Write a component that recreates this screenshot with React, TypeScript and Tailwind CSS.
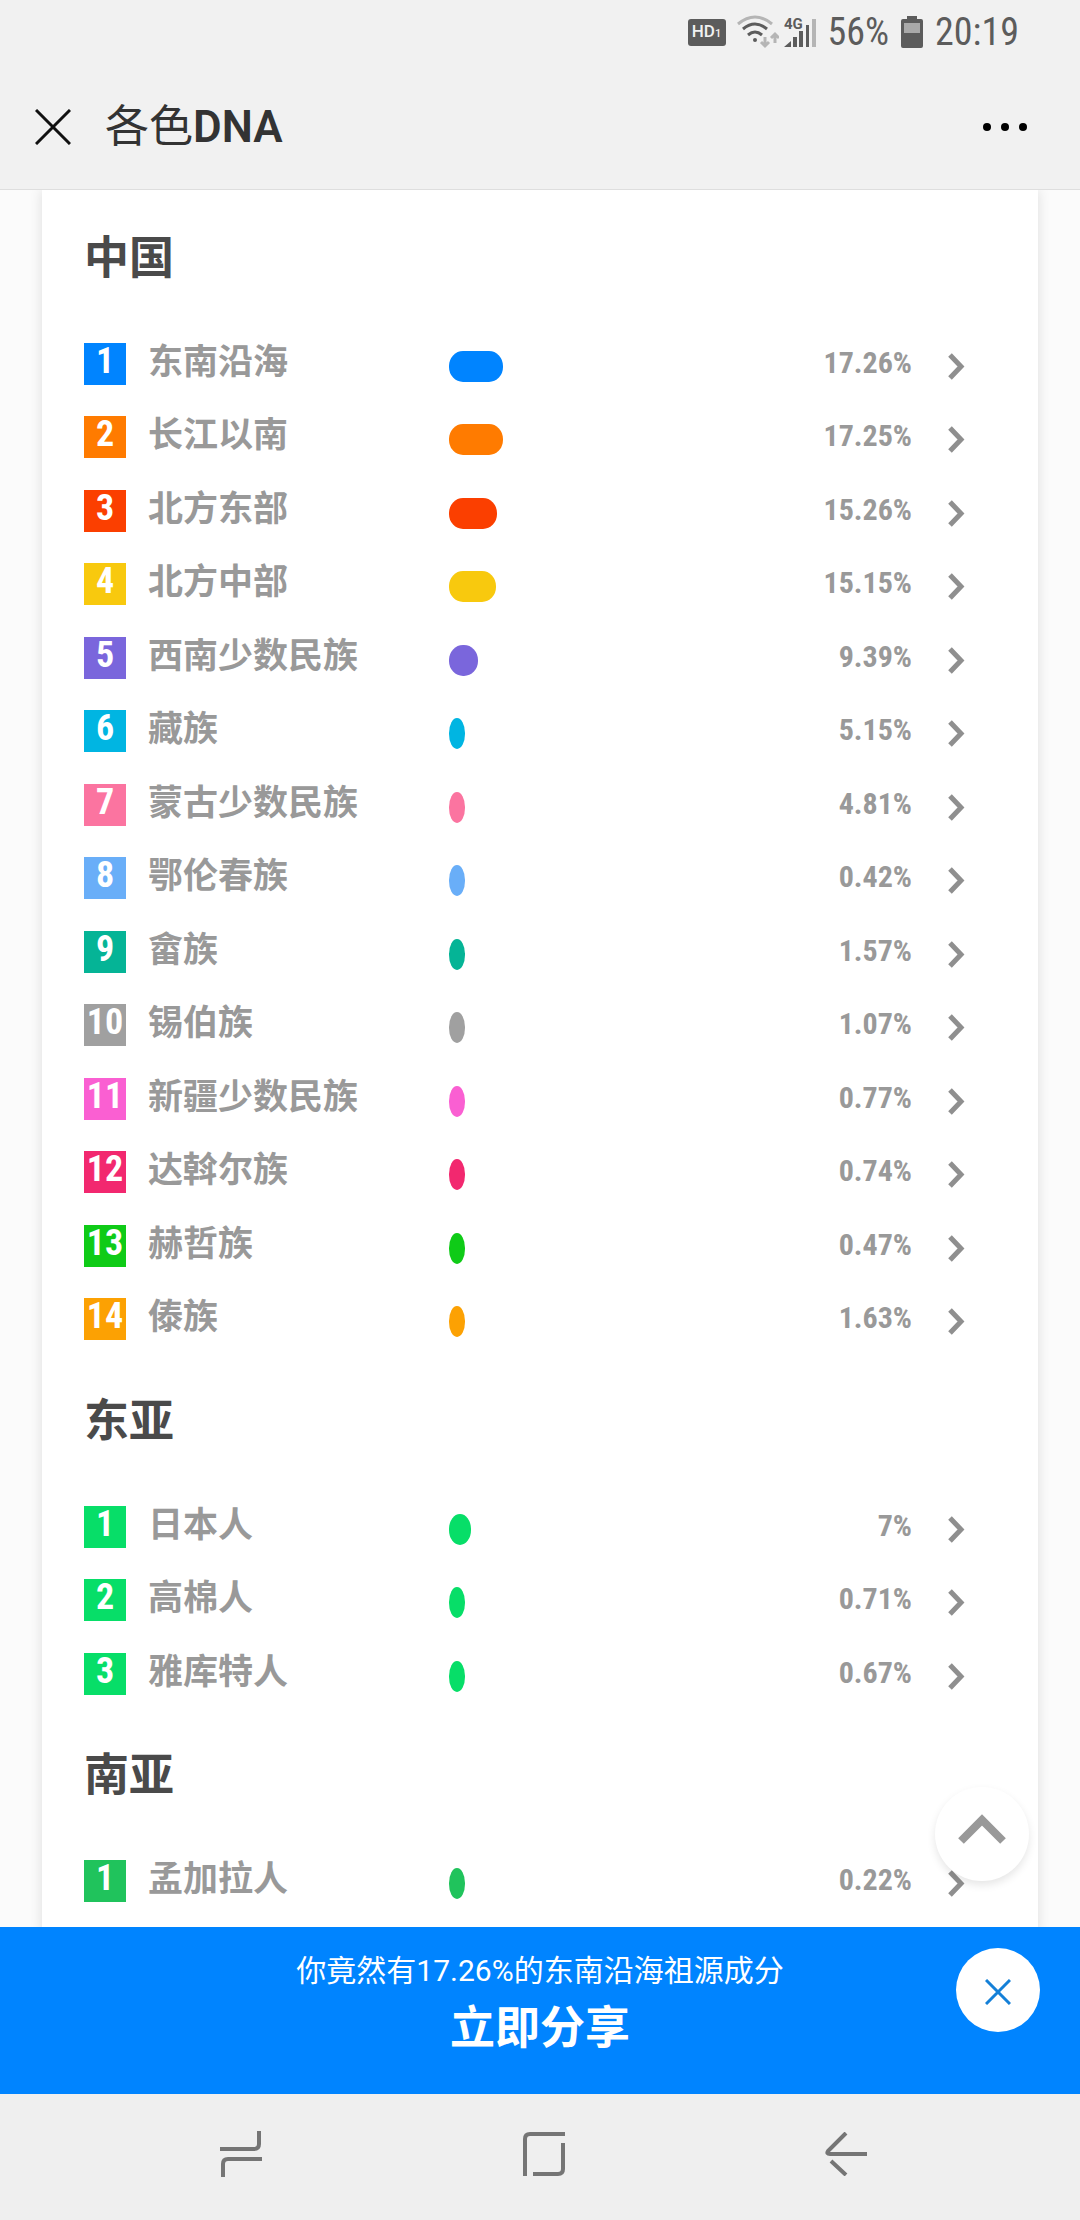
import { useRef, useState } from 'react';

interface Ancestry {
  name: string;
  percent: number;
  color: string;
}

interface Region {
  title: string;
  items: Ancestry[];
}

const regions: Region[] = [
  {
    title: '中国',
    items: [
      { name: '东南沿海', percent: 17.26, color: '#0084ff' },
      { name: '长江以南', percent: 17.25, color: '#ff7b00' },
      { name: '北方东部', percent: 15.26, color: '#fb3f00' },
      { name: '北方中部', percent: 15.15, color: '#f8c90e' },
      { name: '西南少数民族', percent: 9.39, color: '#7a66dc' },
      { name: '藏族', percent: 5.15, color: '#00b5e2' },
      { name: '蒙古少数民族', percent: 4.81, color: '#fb74a0' },
      { name: '鄂伦春族', percent: 0.42, color: '#69aef8' },
      { name: '畲族', percent: 1.57, color: '#05b496' },
      { name: '锡伯族', percent: 1.07, color: '#a0a0a0' },
      { name: '新疆少数民族', percent: 0.77, color: '#fa5fd2' },
      { name: '达斡尔族', percent: 0.74, color: '#f2286f' },
      { name: '赫哲族', percent: 0.47, color: '#0fcb17' },
      { name: '傣族', percent: 1.63, color: '#fca103' },
    ],
  },
  {
    title: '东亚',
    items: [
      { name: '日本人', percent: 7, color: '#07de68' },
      { name: '高棉人', percent: 0.71, color: '#07de68' },
      { name: '雅库特人', percent: 0.67, color: '#07de68' },
    ],
  },
  {
    title: '南亚',
    items: [{ name: '孟加拉人', percent: 0.22, color: '#20c35c' }],
  },
];

// bars never get thinner than 16px
const barWidth = (percent: number) => Math.max(16, Math.round(percent * 3.13));

function StatusBar() {
  return (
    <div className="flex h-16 shrink-0 items-center justify-end pr-[61px] font-['Roboto_Condensed','Liberation_Sans_Narrow',sans-serif] text-[38px] text-[#5c5c5c]">
      <span className="mr-[11px] flex h-[27px] w-[38px] items-center justify-center rounded-[3px] bg-[#5c5c5c] font-['Roboto',sans-serif] text-[17px] font-medium text-[#f1f1f1]">
        HD<span className="pt-1 text-[11px]">1</span>
      </span>
      <svg className="mr-[5px]" width="42" height="34" viewBox="0 0 42 34" fill="none" strokeWidth="3">
        <path d="M1 9Q18-5 35 9" stroke="#b5b5b5" />
        <path d="M6 14Q18 4 30 14" stroke="#5c5c5c" />
        <path d="M11 20Q18 14 25 20" stroke="#5c5c5c" />
        <circle cx="18" cy="25" r="2" fill="#5c5c5c" />
        <path d="M28 22V31M24 27L28 31L32 27" stroke="#b5b5b5" />
        <path d="M38 28V19M34 23L38 19L42 23" stroke="#b5b5b5" />
      </svg>
      <svg className="mr-3" width="32" height="34" viewBox="0 0 32 34" fill="#5c5c5c">
        <text x="0" y="14" fontSize="15" fontWeight="700" fontFamily="Roboto, sans-serif">
          4G
        </text>
        <path d="M0 32L7 26V32ZM9 22H13V32H9ZM15 16H19V32H15ZM22 10H25V32H22Z" />
        <path d="M28 4H32V32H28Z" fill="#b5b5b5" />
      </svg>
      <span className="mr-3 leading-10">56%</span>
      <svg className="mr-3" width="22" height="32" viewBox="0 0 22 32">
        <path d="M6 0H16V3H20Q22 3 22 5V30Q22 32 20 32H2Q0 32 0 30V5Q0 3 2 3H6Z" fill="#5c5c5c" />
        <path d="M3 7H19V17H3Z" fill="#a9a9a9" />
      </svg>
      <span className="leading-10">20:19</span>
    </div>
  );
}

function AncestryRow({ item, rank }: { item: Ancestry; rank: number }) {
  const width = barWidth(item.percent);
  return (
    <li className="odd:h-[73px] even:h-[74px]">
      <a href="#detail" className="flex items-start text-[#999999]">
        <span
          className="mr-[22px] h-[42px] w-[42px] shrink-0 text-center font-['Liberation_Sans_Narrow','Roboto_Condensed',sans-serif] text-[36px] leading-9 font-bold text-white"
          style={{ backgroundColor: item.color }}
        >
          {rank}
        </span>
        <span className="w-[301px] shrink-0 text-[35px] leading-10 font-bold">{item.name}</span>
        <svg className="mt-2 shrink-0" width={width} height="31" fill={item.color}>
          <rect width={width} height="31" rx="14" ry="15" />
        </svg>
        <span className="mr-9 ml-auto font-['Liberation_Sans_Narrow','Roboto_Condensed',sans-serif] text-[30px] leading-10 font-bold">
          {item.percent}%
        </span>
        <svg className="mt-2.5" width="17" height="27" viewBox="0 0 17 27" fill="none" stroke="#8f8f8f" strokeWidth="5">
          <path d="M2 2L13 13.5L2 25" />
        </svg>
      </a>
    </li>
  );
}

export default function App() {
  const [bannerOpen, setBannerOpen] = useState(true);
  const scroller = useRef<HTMLDivElement>(null);

  return (
    <div
      lang="zh-CN"
      className="flex h-screen flex-col overflow-hidden bg-[#f1f1f1] font-['Roboto','Noto_Sans_CJK_SC',sans-serif]"
    >
      <StatusBar />

      {/* Title bar */}
      <header className="flex h-[126px] shrink-0 items-center border-b border-[#dedede] pr-[53px] pl-[35px]">
        <button aria-label="关闭" className="mr-[34px]">
          <svg width="36" height="36" viewBox="0 0 36 36" stroke="#111111" strokeWidth="3">
            <path d="M1 1L35 35M35 1L1 35" />
          </svg>
        </button>
        <h1 className="text-[44px] leading-[60px] text-[#333333]">
          各色<span className="font-semibold">DNA</span>
        </h1>
        <button aria-label="更多" className="ml-auto">
          <svg width="44" height="8" viewBox="0 0 44 8">
            <circle cx="4" cy="4" r="4" />
            <circle cx="22" cy="4" r="4" />
            <circle cx="40" cy="4" r="4" />
          </svg>
        </button>
      </header>

      {/* Result list */}
      <div className="relative min-h-0 flex-1">
        <main ref={scroller} className="h-full overflow-y-auto bg-[#fbfbfb] px-[42px] [scrollbar-width:none]">
          <div className="min-h-full bg-white pt-[19px] pr-[73px] pl-[42px] shadow-[0_0_12px_rgba(0,0,0,0.12)]">
            {regions.map((region) => (
              <section key={region.title}>
                <h2 className="mb-[34px] text-[45px] leading-[100px] font-bold text-[#4a4a4a]">{region.title}</h2>
                <ul>
                  {region.items.map((item, i) => (
                    <AncestryRow key={item.name} item={item} rank={i + 1} />
                  ))}
                </ul>
              </section>
            ))}
          </div>
        </main>
        <button
          aria-label="回到顶部"
          onClick={() => scroller.current?.scrollTo({ top: 0, behavior: 'smooth' })}
          className="absolute right-[51px] bottom-[46px] flex h-[94px] w-[94px] items-center justify-center rounded-full bg-white pb-2.5 shadow-[0_4px_8px_rgba(0,0,0,0.1)]"
        >
          <svg width="48" height="30" viewBox="0 0 48 30" fill="none" stroke="#999999" strokeWidth="8">
            <path d="M3 27L24 6L45 27" />
          </svg>
        </button>
      </div>

      {/* Share banner */}
      {bannerOpen && (
        <div className="relative flex h-[167px] shrink-0 flex-col items-center bg-[#0084ff] pt-6 text-white">
          <p className="text-[30px] leading-10">你竟然有17.26%的东南沿海祖源成分</p>
          <button className="mt-2 text-[45px] leading-[60px] font-bold">立即分享</button>
          <button
            aria-label="关闭分享"
            onClick={() => setBannerOpen(false)}
            className="absolute top-[21px] right-10 flex h-[84px] w-[84px] items-center justify-center rounded-full bg-white pt-1"
          >
            <svg width="26" height="26" viewBox="0 0 26 26" stroke="#1480d8" strokeWidth="3">
              <path d="M1 1L25 25M25 1L1 25" />
            </svg>
          </button>
        </div>
      )}

      {/* System navigation */}
      <nav className="flex h-[126px] shrink-0 items-center justify-between bg-[#efefef] pr-[213px] pb-1.5 pl-[220px]">
        <button aria-label="最近任务">
          <svg width="42" height="46" viewBox="0 0 42 46" fill="none" stroke="#757575" strokeWidth="4">
            <path d="M0 18H34Q39 18 39 13V0M3 46V33Q3 28 8 28H42" />
          </svg>
        </button>
        <button aria-label="主屏幕">
          <svg width="42" height="44" viewBox="0 0 42 44" fill="none" stroke="#757575" strokeWidth="4">
            <path d="M2 44V7Q2 2 7 2H42M40 11V37Q40 42 35 42H10" />
          </svg>
        </button>
        <button aria-label="返回">
          <svg width="42" height="44" viewBox="0 0 42 44" fill="none" stroke="#757575" strokeWidth="4">
            <path d="M21 1L3 19Q1 22 5 22H42M6 29L21 43" />
          </svg>
        </button>
      </nav>
    </div>
  );
}
